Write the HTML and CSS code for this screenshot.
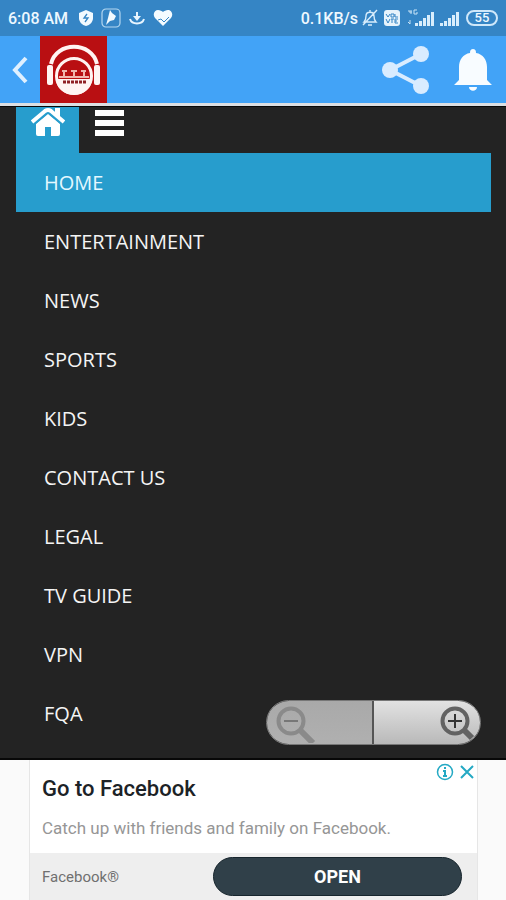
FILE: index.html
```html
<!DOCTYPE html>
<html lang="en">
<head>
<meta charset="utf-8">
<meta name="viewport" content="width=device-width, initial-scale=1">
<title>Menu</title>
<link rel="stylesheet" href="styles.css">
</head>
<body>
<div class="status">
  <span class="clock">6:08 AM</span>
  <svg class="shield" width="16" height="18" viewBox="0 0 16 18"><path fill="#f2faff" d="M8 1l7 3v5c0 4-3 7-7 8-4-1-7-4-7-8V4z"/><path fill="none" stroke="#3585c5" stroke-width="1.3" d="M9 5L6 9h4l-3 4"/></svg>
  <svg class="player" width="20" height="20" viewBox="0 0 20 20"><rect x="1" y="1" width="18" height="18" rx="4" fill="none" stroke="#b5d8f1" stroke-width="1.2"/><path fill="#f2faff" d="M9 2l2 3 4 3-2 4-4 1-4 4 2-7z"/></svg>
  <svg class="download" width="16" height="16" viewBox="0 0 16 16"><path fill="none" stroke="#e8f5ff" stroke-width="2" d="M8 2v6M1 9c2 6 12 6 14 0"/><path fill="#e8f5ff" d="M4 6h8l-4 5z"/></svg>
  <svg class="heart" width="20" height="18" viewBox="0 0 20 18"><path fill="#f4fbff" d="M10 17L2 9C-1 5 2 1 5 1c2 0 4 1 5 2 1-1 3-2 5-2 3 0 6 4 3 8z"/><path fill="none" stroke="#3585c5" stroke-width="1" d="M5 11l3-1 3 3 5-5"/></svg>
  <span class="speed">0.1KB/s</span>
  <svg class="muted" width="16" height="18" viewBox="0 0 16 18"><path fill="none" stroke="#d8edfc" stroke-width="1.4" d="M2 13c2-2 2-4 2-6 0-5 8-5 8 0 0 2 0 4 2 6zM6 16h4M15 1L1 16M8 1v2"/></svg>
  <svg class="volte" width="16" height="16" viewBox="0 0 16 16"><rect width="16" height="16" rx="3" fill="#e6f3fc"/><path fill="none" stroke="#3585c5" stroke-width="1" d="M2 4l2 3 2-3M7 4h3v3H7zM11 4v3h3M2 9l2 4 2-4M7 9h3M8 9v4M14 9h-3v4h3M11 11h2"/></svg>
  <svg class="signal" width="28" height="18" viewBox="0 0 28 18"><path fill="none" stroke="#c8e3f6" d="M2 1v2h3M4 1v4M10 1H7v4h3V3M3 11v4M1 13l2 2"/><path fill="#d8edfc" d="M8 14h3v3H8zM12 12h3v5h-3zM16 9h3v8h-3zM20 6h3v11h-3zM24 3h3v14h-3z"/></svg>
  <svg class="signal-two" width="20" height="18" viewBox="0 0 20 18"><path fill="#d8edfc" d="M0 14h3v3H0zM4 12h3v5H4zM8 9h3v8H8zM12 6h3v11h-3zM16 3h3v14h-3z"/></svg>
  <span class="battery">55</span>
</div>
<header class="bar">
  <button class="back" aria-label="Back"><svg width="16" height="28" viewBox="0 0 16 28"><path fill="none" stroke="#dff0ff" stroke-width="4" d="M14 2L3 14l11 12"/></svg></button>
  <svg class="logo" width="67" height="67" viewBox="0 0 67 67"><rect width="67" height="67" fill="#b90f12"/><path fill="none" stroke="#fff4f2" stroke-width="4" d="M11 28c5-23 41-23 46 0"/><rect x="7" y="29" width="6" height="20" rx="2" fill="#fff4f2"/><rect x="54" y="29" width="6" height="20" rx="2" fill="#fff4f2"/><circle cx="34" cy="40" r="17.500" fill="none" stroke="#fff4f2" stroke-width="3"/><path fill="#fff4f2" d="M16 43h36c-1 21-35 21-36 0z"/><path fill="none" stroke="#f0b5ae" stroke-width="2" d="M22 35h5M24 34v6M31 35h6M34 34v6M41 35h5M44 34v6M19 41h30"/><path fill="none" stroke="#8f2024" stroke-width="3" stroke-dasharray="3 1" d="M23 46h23"/></svg>
  <button class="share" aria-label="Share"><svg width="48" height="50" viewBox="0 0 48 50"><path fill="none" stroke="#d9ecff" stroke-width="4" d="M39 9L8 25l31 16"/><g fill="#d9ecff"><circle cx="39" cy="9" r="8"/><circle cx="8" cy="25" r="8"/><circle cx="39" cy="41" r="8"/></g></svg></button>
  <button class="bell" aria-label="Notifications"><svg width="38" height="44" viewBox="0 0 38 44"><path fill="#f8fcff" d="M19 1c2 0 3 1 3 4 7 1 11 7 11 14v13l5 5H0l5-5V19C5 12 9 6 16 5c0-3 1-4 3-4zM15 39h8c0 5-8 5-8 0z"/></svg></button>
</header>
<main class="page">
  <div class="tabs">
    <a class="home" href="#" aria-label="Home"><svg width="34" height="30" viewBox="0 0 34 30"><path fill="#fff" d="M17 7l12 10v10q0 2-2 2h-7v-9h-6v9H7q-2 0-2-2V17z"/><path fill="#fff" d="M24 1h5v10l-5-4z"/><path fill="none" stroke="#fff" stroke-width="4" d="M1 15L14 4q3-2 6 0l13 11"/><path fill="none" stroke="#279dcd" stroke-width="1" d="M4 17L17 6l13 11"/></svg></a>
    <button class="toggle" aria-label="Toggle menu"><span></span><span></span><span></span></button>
  </div>
  <nav class="menu">
    <a class="active" href="#">HOME</a>
    <a href="#">ENTERTAINMENT</a>
    <a href="#">NEWS</a>
    <a href="#">SPORTS</a>
    <a href="#">KIDS</a>
    <a href="#">CONTACT US</a>
    <a href="#">LEGAL</a>
    <a href="#">TV GUIDE</a>
    <a href="#">VPN</a>
    <a href="#">FQA</a>
  </nav>
  <div class="zoom">
    <button class="out" aria-label="Zoom out"><svg width="40" height="40" viewBox="0 0 40 40"><g fill="none" stroke="#8a8a8a"><circle cx="15" cy="18" r="12.500" stroke-width="4"/><path stroke-width="6" d="M24 27l13 13"/><path stroke="#777" stroke-width="2" d="M8 18h14"/></g></svg></button>
    <button class="in" aria-label="Zoom in"><svg width="40" height="40" viewBox="0 0 40 40"><g fill="none" stroke="#626262"><circle cx="15" cy="18" r="12.500" stroke-width="4"/><path stroke-width="6" d="M24 27l8 8"/><path stroke="#333" stroke-width="2" d="M8 18h14M15 11v14"/></g></svg></button>
  </div>
</main>
<aside class="ad">
  <div class="card">
    <div class="copy">
      <h2>Go to Facebook</h2>
      <p>Catch up with friends and family on Facebook.</p>
    </div>
    <div class="action"><span>Facebook®</span><button class="open">OPEN</button></div>
    <div class="choices">
      <button aria-label="Ad information"><svg width="18" height="18" viewBox="0 0 18 18"><circle cx="9" cy="9" r="7.500" fill="none" stroke="#24a9c4" stroke-width="1.500"/><path fill="none" stroke="#24a9c4" stroke-width="2" d="M9 4v2M7 8h2v5M7 13h4"/></svg></button>
      <button aria-label="Close ad"><svg width="14" height="14" viewBox="0 0 14 14"><path fill="none" stroke="#24a9c4" stroke-width="2" d="M1 1l12 12M13 1L1 13"/></svg></button>
    </div>
  </div>
</aside>
</body>
</html>
```
FILE: styles.css
```css
* { box-sizing: border-box; }
body {
  margin: 0;
  min-height: 100vh;
  display: flex;
  flex-direction: column;
  background: #fafafa;
  font-family: Roboto, "Liberation Sans", sans-serif;
}
button { padding: 0; border: 0; background: none; font: inherit; cursor: pointer; }
svg { display: block; flex: none; }
a { text-decoration: none; }

.status {
  height: 36px;
  padding: 0 8px;
  display: flex;
  align-items: center;
  background: #3585c5;
  color: #eef8ff;
  font-size: 16px;
  font-weight: 500;
}
.shield { margin-left: 10px; }
.player { margin-left: 7px; }
.download { margin-left: 8px; }
.heart { margin-left: 8px; }
.speed { margin-left: auto; }
.muted { margin-left: 4px; }
.volte { margin-left: 6px; }
.signal { margin-left: 7px; }
.signal-two { margin-left: 5px; }
.battery {
  width: 32px;
  margin-left: 6px;
  border: 2px solid #cfe8fa;
  border-radius: 8px;
  font-size: 13px;
  line-height: 12px;
  text-align: center;
}

.bar {
  height: 70px;
  padding: 0 14px 0 12px;
  display: flex;
  align-items: center;
  background: #42a3f7;
  border-bottom: 3px solid #dcdfe3;
}
.logo { margin-left: 12px; }
.share { margin-left: auto; }
.bell { margin-left: 24px; }

.page {
  position: relative;
  padding: 0 15px 15px 16px;
  background: #232323;
  border-top: 1px solid #080808;
  border-bottom: 2px solid #080808;
}
.tabs { height: 46px; display: flex; }
.home {
  width: 63px;
  display: flex;
  justify-content: center;
  background: #279dcd;
}
.toggle {
  margin: 3px 0 0 16px;
  width: 29px;
  display: flex;
  flex-direction: column;
  gap: 4px;
}
.toggle span { height: 6px; width: 100%; background: #fff; }
.menu a {
  display: block;
  padding: 0 28px;
  color: #f4f4f4;
  font-family: "Open Sans", "Noto Sans", sans-serif;
  font-size: 20px;
  line-height: 59px;
}
.menu .active { background: #279dcd; color: #e4f8ff; }

.zoom {
  position: absolute;
  right: 25px;
  bottom: 13px;
  width: 215px;
  height: 45px;
  display: grid;
  grid-template-columns: 1fr 1fr;
  overflow: hidden;
  border: 1px solid #777;
  border-radius: 23px;
}
.zoom button { display: flex; align-items: center; }
.zoom .out { padding-left: 9px; background: linear-gradient(#a9a9a9, #b0b0b0); border-right: 2px solid #555; }
.zoom .in { justify-content: flex-end; background: linear-gradient(#e2e2e2, #b9b9b9); }

.ad { flex: 1; padding: 0 28px 0 29px; display: flex; }
.card {
  position: relative;
  flex: 1;
  display: flex;
  flex-direction: column;
  background: #fff;
  border: solid #e6e6e6;
  border-width: 0 1px;
}
.copy { padding: 16px 12px 0; height: 93px; }
h2 { margin: 0; color: #1c2226; font-size: 22px; font-weight: 500; line-height: 26px; }
p { margin: 16px 0 0; color: #969696; font-size: 17px; line-height: 20px; }
.action {
  flex: 1;
  padding: 0 15px 0 12px;
  display: flex;
  align-items: center;
  justify-content: space-between;
  background: #eee;
  color: #707070;
  font-size: 15px;
}
.open {
  width: 249px;
  height: 39px;
  border: 1px solid #17252d;
  border-radius: 20px;
  background: #304049;
  color: #fff;
  font-size: 18px;
  font-weight: 700;
}
.choices {
  position: absolute;
  top: 3px;
  right: 3px;
  display: flex;
  align-items: center;
  gap: 6px;
}
```
